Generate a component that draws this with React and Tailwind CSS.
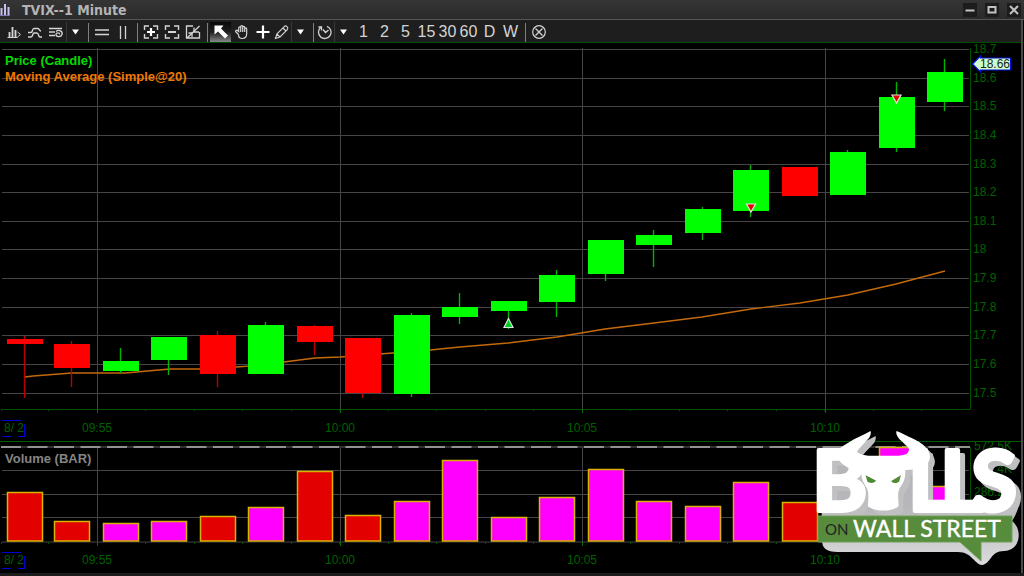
import React from "react";

const CANDLES = [
  { x: 25, top: 339, bottom: 344, high: 336, low: 398, up: false },
  { x: 72, top: 344, bottom: 368, high: 341, low: 387, up: false },
  { x: 121, top: 361, bottom: 371, high: 348, low: 373, up: true },
  { x: 169, top: 337, bottom: 360, high: 337, low: 375, up: true },
  { x: 218, top: 335, bottom: 374, high: 331, low: 387, up: false },
  { x: 266, top: 325, bottom: 374, high: 322, low: 374, up: true },
  { x: 315, top: 326, bottom: 342, high: 325, low: 355, up: false },
  { x: 363, top: 338, bottom: 393, high: 338, low: 398, up: false },
  { x: 412, top: 315, bottom: 394, high: 313, low: 397, up: true },
  { x: 460, top: 307, bottom: 317, high: 293, low: 324, up: true },
  { x: 509, top: 301, bottom: 311, high: 301, low: 329, up: true },
  { x: 557, top: 275, bottom: 302, high: 270, low: 317, up: true },
  { x: 606, top: 240, bottom: 274, high: 240, low: 281, up: true },
  { x: 654, top: 235, bottom: 245, high: 230, low: 267, up: true },
  { x: 703, top: 209, bottom: 233, high: 207, low: 240, up: true },
  { x: 751, top: 170, bottom: 211, high: 165, low: 217, up: true },
  { x: 800, top: 167, bottom: 196, high: 167, low: 196, up: false },
  { x: 848, top: 152, bottom: 195, high: 150, low: 195, up: true },
  { x: 897, top: 97, bottom: 148, high: 82, low: 152, up: true },
  { x: 945, top: 72, bottom: 102, high: 59, low: 111, up: true },
];

const VOLUMES = [
  { top: 492, red: true },
  { top: 521, red: true },
  { top: 523 },
  { top: 521 },
  { top: 516, red: true },
  { top: 507 },
  { top: 471, red: true },
  { top: 515, red: true },
  { top: 501 },
  { top: 460 },
  { top: 517 },
  { top: 497 },
  { top: 469 },
  { top: 501 },
  { top: 506 },
  { top: 482 },
  { top: 502, red: true },
  { top: 497 },
  { top: 447 },
  { top: 486 },
];

const PRICES = ["18.7", "18.6", "18.5", "18.4", "18.3", "18.2", "18.1", "18", "17.9", "17.8", "17.7", "17.6", "17.5"];
const TIMES = [
  { x: 97, label: "09:55" },
  { x: 340, label: "10:00" },
  { x: 582, label: "10:05" },
  { x: 825, label: "10:10" },
];
const AVERAGE =
  "25,377 33,376 72,373 125,373 170,369 200,369 236,367 266,365 284,362 315,358 340,357 380,354 430,350 460,347 508,343 557,337 605,329 654,323 702,317 751,309 800,303 848,295 896,284 945,271";

const AXIS_TEXT = "fill-[#006000] font-['Liberation_Sans',sans-serif] text-[12px]";

function Icon({ children, className = "" }) {
  return (
    <svg
      viewBox="0 0 16 16"
      className={`h-4 w-4 shrink-0 fill-none stroke-[#d4d4d4] ${className}`}
      aria-hidden="true"
    >
      {children}
    </svg>
  );
}

function Tool({ label, active, children }) {
  return (
    <button
      type="button"
      aria-label={label}
      className={`flex h-full w-[21px] shrink-0 items-center justify-center ${
        active ? "bg-gradient-to-b from-[#080808] via-[#202020] to-[#8a8a8a]" : ""
      }`}
    >
      {children}
    </button>
  );
}

function SmallTool({ label, divided, children }) {
  return (
    <button
      type="button"
      aria-label={label}
      className={`flex h-full w-[18px] shrink-0 items-center justify-center ${
        divided ? "border-l border-[#3a3a3a]" : ""
      }`}
    >
      {children}
    </button>
  );
}

function Caret() {
  return (
    <Icon>
      <path d="M4 5.500h7l-3.500 5z" fill="#fff" stroke="none" />
    </Icon>
  );
}

function Separator() {
  return <span className="mr-0.5 ml-1 h-[19px] w-px shrink-0 bg-[#808080]" />;
}

function TitleBar() {
  return (
    <header className="flex h-5 items-center border-b border-[#565656] bg-gradient-to-b from-[#353535] to-[#2a2a2a]">
      <svg viewBox="0 0 12 14" className="h-[14px] w-3" aria-hidden="true">
        <path d="M1.500 5v7M5 1v11M8.500 4v8" stroke="#c6c0ec" strokeWidth="2" />
        <path d="M0 12.500h10" stroke="#7d76b8" />
      </svg>
      <h1 className="ml-[10px] flex-1 font-['DejaVu_Sans_Condensed','DejaVu_Sans',sans-serif] text-[14px] leading-5 font-bold text-[#b4b4b4]">
        TVIX--1 Minute
      </h1>
      <div className="flex items-center gap-2 pr-[3px]">
        <button type="button" aria-label="Minimize" className="flex h-[14px] w-[14px] items-center justify-center bg-[#1c1c1c]">
          <svg viewBox="0 0 14 14" className="h-[14px] w-[14px]">
            <path d="M2.500 7.500h9" stroke="#c4c4c4" strokeWidth="2" />
          </svg>
        </button>
        <button type="button" aria-label="Maximize" className="flex h-[14px] w-[14px] items-center justify-center bg-[#1c1c1c]">
          <svg viewBox="0 0 14 14" className="h-[14px] w-[14px]">
            <rect x="3.500" y="4" width="7" height="5.500" fill="none" stroke="#c4c4c4" strokeWidth="2" />
          </svg>
        </button>
        <button type="button" aria-label="Close" className="flex h-[14px] w-[14px] items-center justify-center bg-[#1c1c1c]">
          <svg viewBox="0 0 14 14" className="h-[14px] w-[14px]">
            <path d="M3 3l8 8M11 3l-8 8" stroke="#c4c4c4" strokeWidth="2" />
          </svg>
        </button>
      </div>
    </header>
  );
}

function Toolbar() {
  return (
    <nav
      aria-label="Chart tools"
      className="mr-[3px] flex h-[23px] items-center border-b border-[#004a00] bg-[#1e1e1e] pt-0.5 pl-[3px]"
    >
      <Tool label="Chart style">
        <Icon>
          <path d="M3.500 8v5M6.500 3v10M9.500 6v7" strokeWidth="1.800" />
          <path d="M1.500 13.500h10M11.500 8l3 2.500-3 2.500" />
        </Icon>
      </Tool>
      <Tool label="Studies">
        <Icon>
          <path d="M1 8.500h3c2 0 1-4 3-4h4c1.500 0 1 2.500 3 2.500M1 13h3c2 0 1.500-4 3-4h3c2 0 1 4 3 4h2" strokeWidth="1.400" />
        </Icon>
      </Tool>
      <Tool label="Settings">
        <Icon>
          <path d="M1 4.500h13M1 8h6M1 11.500h6" strokeWidth="1.300" />
          <path d="M8 7.500c3-2.500 7 0 6 3s-6 2.500-6 0 4-2 3.500 0" strokeWidth="1.300" />
        </Icon>
      </Tool>
      <SmallTool label="More styles" divided>
        <Caret />
      </SmallTool>
      <Separator />
      <Tool label="Horizontal lines">
        <Icon>
          <path d="M1 6h14M1 10.500h14" strokeWidth="1.300" />
        </Icon>
      </Tool>
      <Tool label="Vertical lines">
        <Icon>
          <path d="M5.500 2v13M10.500 2v13" strokeWidth="1.300" />
        </Icon>
      </Tool>
      <Separator />
      <Tool label="Zoom in">
        <Icon>
          <path d="M6 2H1.500v4M10 2h4.500v4M6 14H1.500v-4M10 14h4.500v-4" strokeWidth="1.400" />
          <path d="M8 4v8M4 8h8" stroke="#fff" strokeWidth="2.200" />
        </Icon>
      </Tool>
      <Tool label="Zoom out">
        <Icon>
          <path d="M6 2H1.500v4M10 2h4.500v4M6 14H1.500v-4M10 14h4.500v-4" strokeWidth="1.400" />
          <path d="M4 8h8" strokeWidth="2" />
        </Icon>
      </Tool>
      <Tool label="Reset zoom">
        <Icon>
          <path d="M8 2H1.500v12h13V8M2 14L14.500 2" strokeWidth="1.300" />
          <path d="M9 3.500V8h5M3.500 9H7v4" strokeWidth="1.300" />
        </Icon>
      </Tool>
      <Separator />
      <Tool label="Pointer" active>
        <Icon>
          <path d="M1.500 1.500h9L8 4.500l7 7-3 3-7-7-3.500 3z" fill="#fff" stroke="none" />
        </Icon>
      </Tool>
      <Tool label="Pan">
        <Icon>
          <path
            d="M4.500 10.500L2 8c-1.200-1.200.5-2.500 1.700-1.300l1 .8V4c0-1.500 2-1.500 2 0V2.800c0-1.500 2-1.500 2 0V3.500c0-1.400 2-1.400 2 0V5c0-1.400 2-1.400 2 0v4.500c0 3-1.700 5-4.500 5s-3.700-2-3.700-4M6.700 4v4M8.700 3.500V8M10.700 4v4"
            strokeWidth="1.200"
          />
        </Icon>
      </Tool>
      <Tool label="Crosshair">
        <Icon>
          <path d="M8 1.500v13M1.500 8h13" stroke="#fff" strokeWidth="2.200" />
        </Icon>
      </Tool>
      <SmallTool label="Draw">
        <Icon>
          <path d="M1.500 14.500l1.300-4.500L10.500 2.300c1.500-1.200 4.200 1.300 3 3L6 13zM2.800 10L6 13M9 4l3 3" strokeWidth="1.100" />
        </Icon>
      </SmallTool>
      <SmallTool label="More drawing tools" divided>
        <Caret />
      </SmallTool>
      <Separator />
      <SmallTool label="Time range">
        <Icon>
          <path d="M10 2.300A6.300 6.300 0 1 1 3.800 3.300M1.500 3h3v3.500M6 5.500l2.500 3L11.500 6" strokeWidth="1.300" />
        </Icon>
      </SmallTool>
      <SmallTool label="More time ranges" divided>
        <Caret />
      </SmallTool>
      <div className="flex h-full pl-px">
        {["1", "2", "5", "15", "30", "60", "D", "W"].map((t) => (
          <button
            key={t}
            type="button"
            className="flex w-[21px] items-center justify-center font-['Liberation_Sans',sans-serif] text-[16px] leading-5 text-[#d4d4d4]"
          >
            {t}
          </button>
        ))}
      </div>
      <Separator />
      <Tool label="Cancel">
        <Icon>
          <circle cx="8" cy="8" r="6.300" strokeWidth="1.200" />
          <path d="M4.500 4.500l7 7M11.500 4.500l-7 7" strokeWidth="1.300" />
        </Icon>
      </Tool>
    </nav>
  );
}

function DateMark({ y }) {
  return (
    <g>
      <path d={`M2 ${y - 11.5}h19M2 ${y + 4.5}h9M18 ${y + 4.5}h7M24.5 ${y - 8}v12`} fill="none" stroke="#0000d0" />
      <text x="4" y={y} className={AXIS_TEXT}>
        8/ 2
      </text>
    </g>
  );
}

function TimeAxis({ lineY, textY }) {
  return (
    <g>
      {CANDLES.map((c) => (
        <path key={c.x} d={`M${c.x - 23.5} ${lineY}v2`} stroke="#005500" />
      ))}
      {TIMES.map((t) => (
        <g key={t.x}>
          <path d={`M${t.x + 0.5} ${lineY}v4`} stroke="#007000" />
          <text x={t.x} y={textY} textAnchor="middle" className={AXIS_TEXT}>
            {t.label}
          </text>
        </g>
      ))}
      <DateMark y={textY} />
    </g>
  );
}

function PricePanel() {
  return (
    <section aria-label="Price" className="relative">
      <svg viewBox="0 43 1024 398" className="block h-auto w-full">
        {PRICES.map((p, i) => {
          const y = Math.round(49 + i * 28.63) + 0.5;
          return (
            <g key={p}>
              <path d={`M2 ${y}H969`} stroke="#464446" />
              <text x="973" y={y + 3} className={AXIS_TEXT}>
                {p}
              </text>
            </g>
          );
        })}
        {TIMES.map((t) => (
          <path key={t.x} d={`M${t.x + 0.5} 48V409`} stroke="#464446" />
        ))}
        <path d="M2 409.500H970.500V48" fill="none" stroke="#005000" />
        <TimeAxis lineY={409} textY={432} />
        <polyline points={AVERAGE} fill="none" stroke="#c46a0a" strokeWidth="1.400" />
        {CANDLES.map((c) => (
          <g key={c.x}>
            <path d={`M${c.x - 0.5} ${c.high}V${c.low}`} stroke={c.up ? "#00b400" : "#b80000"} strokeWidth="1.400" />
            <rect x={c.x - 18} y={c.top} width="36" height={c.bottom - c.top} fill={c.up ? "#00ff00" : "#ff0000"} />
          </g>
        ))}
        <path d="M504 327.500h9l-4.500-9z" fill="#00d020" stroke="#e0e0e0" strokeWidth="1.200" />
        <path d="M746.500 204h9l-4.500 8z" fill="#e00000" stroke="#e8e0d8" strokeWidth="1.200" />
        <path d="M892 95h9l-4.500 8z" fill="#e00000" stroke="#e8e0d8" strokeWidth="1.200" />
        <path d="M972.500 64l8-8v2h30v12h-30v2z" fill="#ccffcc" stroke="#0010e0" strokeWidth="1.200" />
        <text x="980" y="68" className="fill-[#222222] font-['Liberation_Sans',sans-serif] text-[12px]">
          18.66
        </text>
      </svg>
      <div className="absolute top-[10px] left-[5px] font-['Liberation_Sans',sans-serif] text-[13px] leading-4 font-bold">
        <p className="text-[#00dc00]">Price (Candle)</p>
        <p className="text-[#f07800]">Moving Average (Simple@20)</p>
      </div>
    </section>
  );
}

function VolumePanel() {
  return (
    <section aria-label="Volume" className="relative">
      <svg viewBox="0 441 1024 132" className="block h-auto w-full">
        <path d="M0 441.500H1021" stroke="#005800" />
        <path d="M2 470.500H969M2 494.500H969M2 517.500H969M2 542H969" stroke="#464446" />
        {TIMES.map((t) => (
          <path key={t.x} d={`M${t.x + 0.5} 447V542`} stroke="#464446" />
        ))}
        <path d="M2 447H969" stroke="#303030" strokeWidth="2" />
        <path d="M1 447H970" stroke="#929292" strokeWidth="2" strokeDasharray="20 6.500" />
        <path d="M970.500 447V542" stroke="#005000" />
        <TimeAxis lineY={542} textY={564} />
        {VOLUMES.map((v, i) => (
          <rect
            key={CANDLES[i].x}
            x={CANDLES[i].x - 17.5}
            y={v.top + 0.5}
            width="35"
            height={541 - v.top - 0.5}
            fill={v.red ? "#e20000" : "#ff00ff"}
            stroke="#d8b400"
            strokeWidth="1.500"
          />
        ))}
        <text x="974" y="450" className={AXIS_TEXT}>572.5K</text>
        <text x="974" y="473" className={AXIS_TEXT}>429.4K</text>
        <text x="974" y="496" className={AXIS_TEXT}>286.2K</text>
      </svg>
      <p className="absolute top-[10px] left-[5px] font-['Liberation_Sans',sans-serif] text-[13px] leading-4 font-bold text-[#858585]">
        Volume (BAR)
      </p>
    </section>
  );
}

const HEAD =
  "M212 33C190 45 165 55 145 68C128 78 112 88 110 98C112 125 138 150 185 150C182 175 192 190 200 203C208 218 205 235 204 258C212 268 235 272 250 272C266 272 288 268 296 258C295 235 292 218 300 203C310 190 318 175 316 150C350 150 392 140 390 108C388 80 350 60 330 52C315 44 302 38 290 33C286 42 295 56 308 66C326 80 334 88 320 102C310 106 300 106 295 107L205 107C195 107 180 103 170 97C176 86 184 78 194 68C208 56 215 45 212 33Z";

const LOGO_LETTERS = [
  { x: 812, char: "B" },
  { x: 908, char: "L" },
  { x: 940, char: "L" },
  { x: 971, char: "S" },
];

function Logo() {
  return (
    <svg
      viewBox="814 428 208 142"
      className="absolute right-[2px] bottom-[3px] h-[142px] w-[208px]"
      role="img"
      aria-label="Bulls on Wall Street"
    >
      <defs>
        <linearGradient id="shade" x1="0" y1="0" x2="0" y2="1">
          <stop offset="0" stopColor="#b4b4b8" />
          <stop offset="0.500" stopColor="#b8b8bc" />
          <stop offset="1" stopColor="#dcdcde" />
        </linearGradient>
      </defs>
      <path
        d="M822 455H836L846 462H918V506H1000L1018 492C1021 506 1016 515 1012 521C1022 528 1022 550 1004 551C990 551 991 564 982 565C974 564 972 552 958 552H838C826 552 822 548 822 540Z"
        fill="url(#shade)"
      />
      <g className="drop-shadow-[5px_5px_0_#c0c0c3]">
        <g fill="#ffffff" stroke="#ffffff" strokeWidth="4" strokeLinejoin="round">
          {LOGO_LETTERS.map((l) => (
            <text key={l.x} x={l.x} y="511" className="font-[Lato,sans-serif] text-[84px] font-bold">
              {l.char}
            </text>
          ))}
        </g>
        <path d={HEAD} transform="translate(800 420) scale(0.333)" fill="#ffffff" />
      </g>
      <path
        d="M197 166L228 182C226 190 208 192 202 184ZM303 166L274 183C276 190 294 192 298 184Z"
        transform="translate(800 420) scale(0.333)"
        fill="#4f8a35"
      />
      <path d="M818 516H1012V542H981V561L960 542H818Z" fill="#568c3c" stroke="#6fa055" />
      <text x="825" y="535" className="fill-[#222222] font-[Lato,sans-serif] text-[15px]">
        ON
      </text>
      <text x="853" y="537" className="fill-white stroke-white stroke-[0.4px] font-[Lato,sans-serif] text-[23px]">
        WALL STREET
      </text>
    </svg>
  );
}

export default function App() {
  return (
    <div className="min-h-screen bg-black">
      <TitleBar />
      <main className="relative border-b-[3px] border-[#1c1c1c]">
        <div className="pointer-events-none absolute inset-y-0 right-px w-0.5 bg-[#4a4a4a]" />
        <Toolbar />
        <PricePanel />
        <VolumePanel />
        <Logo />
      </main>
    </div>
  );
}
